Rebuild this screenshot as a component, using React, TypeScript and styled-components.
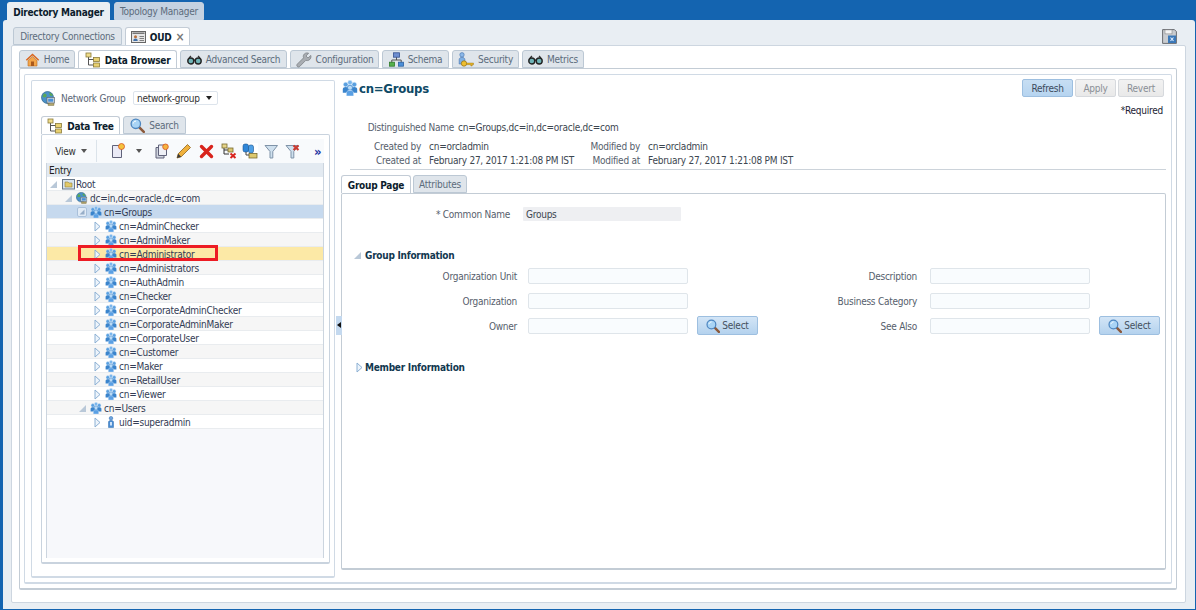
import React from 'react';
import styled, { createGlobalStyle } from 'styled-components';

const GlobalStyle = createGlobalStyle`
  html, body { margin: 0; padding: 0; }
  body {
    font-family: "DejaVu Sans Condensed", "DejaVu Sans", Tahoma, sans-serif;
    font-size: 10px;
    letter-spacing: -0.25px;
    color: #3c4650;
  }
`;

const Page = styled.div`
  width: 1196px;
  height: 610px;
  box-sizing: border-box;
  background: #1464b0;
  padding: 2px 1px 1px 3px;
  display: flex;
  flex-direction: column;
  overflow: hidden;
`;

const TabRow = styled.div<{ $pad?: number; $gap?: number }>`
  display: flex;
  align-items: flex-end;
  height: 18px;
  flex: none;
  padding-left: ${(p) => p.$pad ?? 0}px;
  gap: ${(p) => p.$gap ?? 3}px;
`;

const Tab = styled.div<{ $w: number; $active?: boolean; $tone?: string }>`
  width: ${(p) => p.$w}px;
  height: 18px;
  box-sizing: border-box;
  padding-top: 1px;
  display: flex;
  align-items: center;
  justify-content: center;
  gap: 4px;
  white-space: nowrap;
  border: 1px solid ${(p) => (p.$active ? '#c3ccd6' : '#bcc8d4')};
  border-bottom: ${(p) => (p.$active ? 'none' : '1px solid #bcc8d4')};
  border-radius: 3px 3px 0 0;
  background: ${(p) => (p.$active ? '#ffffff' : p.$tone ?? '#dfe5eb')};
  color: ${(p) => (p.$active ? '#0c1c2c' : '#5c6c7c')};
  font-weight: ${(p) => (p.$active ? 700 : 400)};
`;

const TopTab = styled(Tab)`
  border-color: ${(p) => (p.$active ? '#e9eef3' : '#c5d2e1')};
  background: ${(p) => (p.$active ? '#e9eef3' : '#c5d2e1')};
`;

const CloseMark = styled.span`
  color: #777;
  font-size: 12px;
  font-weight: 700;
`;

const Shell = styled.div`
  flex: 1;
  min-height: 0;
  background: #e9eef3;
  padding: 7px 9px 6px 8px;
  display: flex;
  flex-direction: column;
  border-radius: 3px 3px 0 0;
`;

const ConnectionTabs = styled(TabRow)`
  padding-left: 2px;
  justify-content: flex-start;
`;

const SaveButton = styled.div`
  margin-left: auto;
  margin-right: 9px;
  align-self: center;
  display: flex;
`;

const WhitePanel = styled.div`
  flex: 1;
  min-height: 0;
  background: #fff;
  border: 1px solid #cdd6e0;
  border-radius: 2px;
  padding: 4px 8px 12px 7px;
  display: flex;
  flex-direction: column;
`;

const TabBody = styled.div`
  flex: 1;
  min-height: 0;
  background: #fff;
  border: 1px solid #c3ccd5;
  border-bottom-width: 2px;
  border-radius: 2px;
  padding: 5px 4px 4px 4px;
  display: flex;
  flex-direction: column;
`;

const SplitFrame = styled.div`
  flex: 1;
  min-height: 0;
  border: 1px solid #d0dae5;
  border-bottom-width: 2px;
  border-radius: 2px;
  padding: 5px 5px 4px 6px;
  display: flex;
`;

const LeftPane = styled.div`
  width: 304px;
  flex: none;
  box-sizing: border-box;
  border: 1px solid #d0dae5;
  border-bottom-width: 2px;
  border-radius: 2px;
  padding: 9px 4px 12px 9px;
  display: flex;
  flex-direction: column;
`;

const Gutter = styled.div`
  width: 6px;
  flex: none;
  display: flex;
  align-items: center;
  justify-content: flex-end;
  padding-bottom: 8px;
`;

const CollapseHandle = styled.div`
  width: 6px;
  height: 19px;
  box-sizing: border-box;
  margin-right: -1px;
  background: #c4d9ef;
  display: flex;
  align-items: center;
  justify-content: center;
  position: relative;
  z-index: 1;
  &::before {
    content: '';
    border-style: solid;
    border-width: 3px 4px 3px 0;
    border-color: transparent #111 transparent transparent;
  }
`;

const NetworkRow = styled.div`
  display: flex;
  align-items: center;
  height: 16px;
  gap: 5px;
  flex: none;
`;

const NetworkLabel = styled.span`
  width: 67px;
  white-space: nowrap;
  color: #5c6878;
`;

const FakeSelect = styled.div`
  width: 85px;
  height: 14px;
  box-sizing: border-box;
  border: 1px solid #dde4ec;
  border-radius: 2px;
  display: flex;
  align-items: center;
  justify-content: space-between;
  padding: 0 5px 0 3px;
  white-space: nowrap;
  color: #333;
`;

const DownCaret = styled.span<{ $dark?: boolean }>`
  display: inline-block;
  border-style: solid;
  border-width: 4px 3.5px 0 3.5px;
  border-color: ${(p) => (p.$dark ? '#222' : '#555')} transparent transparent transparent;
`;

const TreeTabs = styled(TabRow)`
  margin-top: 10px;
`;

const TreePanel = styled.div`
  flex: 1;
  min-height: 0;
  border: 1px solid #c9d3de;
  border-bottom-width: 2px;
  border-radius: 2px;
  padding: 4px 5px 4px 4px;
  display: flex;
  flex-direction: column;
`;

const Toolbar = styled.div`
  height: 24px;
  flex: none;
  background: #f8fafc;
  display: flex;
  align-items: center;
`;

const ViewMenu = styled.div`
  width: 51px;
  height: 22px;
  box-sizing: border-box;
  border-right: 1px solid #dbe3ea;
  display: flex;
  align-items: center;
  justify-content: center;
  gap: 5px;
  color: #333;
`;

const ToolIcons = styled.div`
  display: flex;
  align-items: center;
  flex: 1;
  padding-left: 14px;
`;

const ToolIcon = styled.span<{ $gap?: number }>`
  display: flex;
  margin-left: ${(p) => p.$gap ?? 6}px;
  &:first-child { margin-left: 0; }
`;

const MoreChevrons = styled.span`
  margin-left: 14px;
  color: #2030a0;
  font-size: 13px;
  font-weight: 700;
  line-height: 1;
`;

const TreeTable = styled.div`
  flex: 1;
  min-height: 0;
  background: #f7f8fb;
  border-left: 1px solid #ccd5df;
  border-right: 1px solid #ccd5df;
  display: flex;
  flex-direction: column;
`;

const EntryHeader = styled.div`
  height: 14px;
  flex: none;
  box-sizing: border-box;
  background: #e3eaf1;
  color: #222;
  padding: 1px 0 0 2px;
  line-height: 13px;
`;

const rowBg = (state?: string, alt?: boolean) =>
  state === 'selected' ? '#c6d9ee' : state === 'hover' ? '#fce9a6' : alt ? '#f6f6f6' : '#ffffff';

const TreeRow = styled.div<{ $state?: string; $alt?: boolean; $indent: number }>`
  height: 14px;
  flex: none;
  box-sizing: border-box;
  position: relative;
  display: flex;
  align-items: center;
  background: ${(p) => rowBg(p.$state, p.$alt)};
  border-bottom: 1px solid #e9ecef;
  padding: 1px 0 0 ${(p) => p.$indent}px;
  color: #333c55;
  white-space: nowrap;
`;

const Twisty = styled.span<{ $w?: number }>`
  width: ${(p) => p.$w ?? 11}px;
  flex: none;
  display: flex;
`;

const NodeIcon = styled.span<{ $w?: number }>`
  width: ${(p) => p.$w ?? 14}px;
  flex: none;
  display: flex;
`;

const Callout = styled.div`
  position: absolute;
  left: 31px;
  top: -2px;
  width: 140px;
  height: 16px;
  box-sizing: border-box;
  border: 3px solid #ed1c24;
`;

const RightPane = styled.div`
  flex: 1;
  min-width: 0;
  display: flex;
  flex-direction: column;
  padding-bottom: 8px;
`;

const TitleRow = styled.div`
  height: 18px;
  margin-top: -1px;
  display: flex;
  align-items: center;
  flex: none;
  padding-left: 1px;
  gap: 1px;
`;

const Title = styled.h1`
  margin: 0;
  font-size: 13px;
  font-weight: 700;
  color: #0f4a66;
  flex: 1;
`;

const ActionButton = styled.div<{ $w: number; $primary?: boolean }>`
  width: ${(p) => p.$w}px;
  height: 18px;
  box-sizing: border-box;
  margin-left: 2px;
  display: flex;
  align-items: center;
  justify-content: center;
  border: 1px solid ${(p) => (p.$primary ? '#9dbfe0' : '#d6d9dd')};
  border-radius: 2px;
  background: ${(p) =>
    p.$primary ? 'linear-gradient(#c7def3, #b6d4f0)' : 'linear-gradient(#f2f2f2, #e9e9e9)'};
  color: ${(p) => (p.$primary ? '#3c4a5c' : '#8a8f96')};
`;

const ActionGroup = styled.div`
  display: flex;
  margin-right: 2px;
`;

const Required = styled.div`
  height: 14px;
  margin-top: 7px;
  line-height: 14px;
  text-align: right;
  padding-right: 3px;
  color: #223;
  flex: none;
`;

const MetaLine = styled.div<{ $top: number }>`
  display: flex;
  align-items: center;
  height: 14px;
  flex: none;
  margin-top: ${(p) => p.$top}px;
  white-space: nowrap;
`;

const MetaLabel = styled.span<{ $w: number }>`
  width: ${(p) => p.$w}px;
  flex: none;
  text-align: right;
  color: #56606c;
`;

const MetaValue = styled.span<{ $w?: number; $left: number }>`
  width: ${(p) => (p.$w ? `${p.$w}px` : 'auto')};
  flex: none;
  margin-left: ${(p) => p.$left}px;
  color: #3c4650;
`;

const Separator = styled.div`
  height: 1px;
  flex: none;
  background: #ccd3da;
  margin: 2px 0 5px 9px;
`;

const InnerTabBody = styled.div`
  flex: 1;
  min-height: 0;
  border: 1px solid #c3ccd5;
  border-bottom-width: 2px;
  border-radius: 2px;
  display: flex;
  flex-direction: column;
`;

const CommonNameRow = styled.div`
  display: flex;
  align-items: center;
  height: 14px;
  margin-top: 13px;
  flex: none;
`;

const CommonLabel = styled.span`
  width: 168px;
  text-align: right;
  color: #56606c;
`;

const ReadOnlyValue = styled.div`
  width: 158px;
  height: 14px;
  margin-left: 13px;
  padding: 1px 0 0 3px;
  box-sizing: border-box;
  background: #eeeff2;
  line-height: 13px;
  border-radius: 1px;
  color: #3c4650;
`;

const SectionHeader = styled.div<{ $top: number; $pad: number }>`
  display: flex;
  align-items: center;
  height: 14px;
  flex: none;
  margin-top: ${(p) => p.$top}px;
  padding-left: ${(p) => p.$pad}px;
  font-weight: 700;
  color: #12384f;
`;

const SectionTwisty = styled.span<{ $w: number }>`
  width: ${(p) => p.$w}px;
  flex: none;
  display: flex;
`;

const FormGrid = styled.div`
  display: grid;
  grid-template-columns: 175px 160px 70px 172px 160px 70px;
  grid-auto-rows: 25px;
  align-items: center;
  margin-left: 11px;
  margin-top: 1px;
  flex: none;
`;

const FieldLabel = styled.div<{ $pad: number }>`
  text-align: right;
  padding: 2px ${(p) => p.$pad}px 0 0;
  color: #56606c;
`;

const FieldInput = styled.div`
  height: 16px;
  box-sizing: border-box;
  border: 1px solid #dfe5ea;
  border-radius: 2px;
  background: #f9fcfe;
`;

const SelectButton = styled.div`
  width: 61px;
  height: 19px;
  margin-left: 9px;
  box-sizing: border-box;
  border: 1px solid #9dbfe0;
  border-radius: 2px;
  background: linear-gradient(#d3e5f6, #b4d2ee);
  display: flex;
  align-items: center;
  justify-content: center;
  gap: 2px;
  color: #44505e;
`;

const GroupIcon = ({ size = 12 }: { size?: number }) => (
  <svg width={size} height={size} viewBox="0 0 12 12">
    <circle cx="2.800" cy="3.400" r="1.800" fill="#5aa0e0" stroke="#dcecfb" strokeWidth=".4" />
    <circle cx="9.200" cy="3.400" r="1.800" fill="#5aa0e0" stroke="#dcecfb" strokeWidth=".4" />
    <circle cx="6" cy="1.900" r="1.700" fill="#7ab6ec" stroke="#dcecfb" strokeWidth=".4" />
    <path d="M.6 9.500V6.800C.6 5.700 1.600 5.200 2.800 5.200S5 5.700 5 6.800v2.700z" fill="#3a84cc" />
    <path d="M7 9.500V6.800c0-1.100 1-1.600 2.200-1.600s2.200.5 2.200 1.600v2.700z" fill="#3a84cc" />
    <circle cx="6" cy="5.800" r="1.900" fill="#b9daf6" stroke="#3a84cc" strokeWidth=".6" />
    <path d="M3.300 12V9.600c0-1.100 1.200-1.800 2.700-1.800s2.700.7 2.700 1.800V12z" fill="#5aa0e4" stroke="#dcecfb" strokeWidth=".4" />
  </svg>
);

const TreeBoxesIcon = () => (
  <svg width="16" height="16" viewBox="0 0 16 16">
    <path d="M3.500 4v9H9M3.500 7.500H9" fill="none" stroke="#555" strokeWidth="1" />
    <rect x="1" y="1" width="5" height="4" fill="#efdc8a" stroke="#8a7a3a" strokeWidth=".8" />
    <rect x="8.500" y="5.500" width="6" height="4" fill="#e8d070" stroke="#8a7a3a" strokeWidth=".8" />
    <rect x="8.500" y="11" width="6" height="4" fill="#e8d070" stroke="#8a7a3a" strokeWidth=".8" />
  </svg>
);

const HomeIcon = () => (
  <svg width="15" height="15" viewBox="0 0 15 15">
    <path d="M.8 7.800 7.500 1.500l6.700 6.300-1 1L7.500 3.600 1.800 8.800z" fill="#d9651e" />
    <path d="M3 8.500 7.500 4.500 12 8.500V14H3z" fill="#f3a64a" stroke="#b9691f" strokeWidth=".6" />
    <rect x="6" y="9.500" width="3" height="4.500" fill="#a9591c" />
  </svg>
);

const GlassesIcon = () => (
  <svg width="15" height="12" viewBox="0 0 15 12">
    <path d="M2 4 4 2M13 4l-2-2" stroke="#333" strokeWidth="1.200" fill="none" />
    <circle cx="3.800" cy="7" r="3" fill="#6fb4b8" stroke="#222" strokeWidth="1.400" />
    <circle cx="11.200" cy="7" r="3" fill="#6fb4b8" stroke="#222" strokeWidth="1.400" />
    <path d="M6.500 6.200h2" stroke="#222" strokeWidth="1.200" />
  </svg>
);

const WrenchIcon = () => (
  <svg width="16" height="16" viewBox="0 0 16 16">
    <path
      d="M14.800 3.400 12 6 10 4l2.600-2.800c-2-.8-4.200 0-5 1.800-.5 1-.4 2 0 2.800L1.400 12c-.8.800-.8 1.800-.1 2.500s1.700.7 2.500-.1l6-6.100c1 .4 2.100.4 3-.1 1.800-.9 2.600-3 2-4.800z"
      fill="#a9adb2"
      stroke="#74787d"
      strokeWidth=".7"
    />
  </svg>
);

const SchemaIcon = () => (
  <svg width="15" height="15" viewBox="0 0 15 15">
    <path d="M7.500 5v3M2.800 11V8h9.400v3" fill="none" stroke="#555" strokeWidth="1" />
    <rect x="4.500" y=".8" width="6" height="4.400" fill="#6f8fd0" stroke="#34508f" strokeWidth=".8" />
    <rect x=".5" y="10.200" width="5" height="4" fill="#55b04c" stroke="#2e7a2a" strokeWidth=".8" />
    <rect x="9.500" y="10.200" width="5" height="4" fill="#4c8fd8" stroke="#2b5f9f" strokeWidth=".8" />
  </svg>
);

const SecurityIcon = () => (
  <svg width="16" height="16" viewBox="0 0 16 16">
    <circle cx="4" cy="2.800" r="2.200" fill="#8cb8e8" stroke="#3f70ad" strokeWidth=".6" />
    <path d="M1.200 12V7.500C1.200 6 2.400 5.400 4 5.400S6.800 6 6.800 7.500V12z" fill="#7fb0e4" stroke="#3f70ad" strokeWidth=".6" />
    <circle cx="6" cy="11.500" r="2.700" fill="#eebe2f" stroke="#8f6d12" strokeWidth=".7" />
    <path d="M8.500 11h7v1.700h-1.300v1.300h-1.400v-1.300H8.500z" fill="#e6b326" stroke="#8f6d12" strokeWidth=".4" />
  </svg>
);

const SearchIcon = ({ size = 15 }: { size?: number }) => (
  <svg width={size} height={size} viewBox="0 0 15 15">
    <path d="m8.800 8.800 5 5" stroke="#8c5a3c" strokeWidth="2.600" strokeLinecap="round" />
    <circle cx="5.800" cy="5.800" r="4.700" fill="#a9d4f5" stroke="#4d86c0" strokeWidth="1.300" />
    <path d="M3.200 5.500c.3-1.500 1.300-2.300 2.800-2.400" fill="none" stroke="#fff" strokeWidth="1" />
  </svg>
);

const GlobeIcon = ({ size = 15 }: { size?: number }) => (
  <svg width={size} height={size} viewBox="0 0 15 15">
    <circle cx="6.500" cy="6.500" r="6" fill="#4a90c8" stroke="#2d6488" strokeWidth=".7" />
    <path d="M3 2.500c2 .2 3 1.200 2.500 2.800S2.500 6.500 1.500 5.500M9 1.500c1 1.300 2.500 1.500 3 3L9.500 5 8 3z" fill="#5aa856" />
    <rect x="6" y="6.500" width="7.500" height="5.500" fill="#cfd8de" stroke="#5c6a74" strokeWidth=".7" />
    <rect x="7.200" y="7.700" width="5" height="3" fill="#4a90d8" />
    <rect x="7" y="12.500" width="6" height="2" fill="#b3a66c" stroke="#6e6538" strokeWidth=".4" />
  </svg>
);

const CardIcon = () => (
  <svg width="15" height="12" viewBox="0 0 15 12">
    <rect x=".5" y=".5" width="14" height="11" fill="#e6e6e6" stroke="#666" />
    <rect x="1.500" y="1.500" width="12" height="1.500" fill="#777" />
    <circle cx="4.500" cy="5.800" r="1.500" fill="#b5703c" />
    <path d="M2.300 10c0-1.600 1-2.400 2.200-2.400S6.700 8.400 6.700 10z" fill="#3f6fa8" />
    <path d="M8.500 5.500h4.500M8.500 7.500h4.500M8.500 9.500h4.500" stroke="#666" strokeWidth=".8" />
  </svg>
);

const SaveIcon = () => (
  <svg width="15" height="15" viewBox="0 0 15 15">
    <path d="M.6.600h11.800l2 2v11.800H.6z" fill="#c9ccd0" stroke="#5c6064" strokeWidth=".9" />
    <rect x="3" y=".9" width="7" height="4" fill="#f4f4f4" stroke="#777" strokeWidth=".5" />
    <rect x="6" y="6.500" width="8" height="7.500" fill="#3b78b8" />
    <path d="m8.500 8.500 3 3.300m0-3.300-3 3.300" stroke="#dcecff" strokeWidth="1.100" />
  </svg>
);

const FolderNodeIcon = () => (
  <svg width="13" height="12" viewBox="0 0 13 12">
    <rect x=".5" y="1.500" width="12" height="9.500" fill="#d7e3ef" stroke="#69788a" />
    <path d="M3 4h3l1 1h3v4H3z" fill="#e2c968" stroke="#93803a" strokeWidth=".6" />
  </svg>
);

const UserIcon = () => (
  <svg width="8" height="12" viewBox="0 0 8 12">
    <circle cx="4" cy="2.200" r="1.800" fill="#6ea4de" stroke="#2f6cae" strokeWidth=".5" />
    <path d="M1.500 11.500V6c0-1 1-1.500 2.500-1.500S6.500 5 6.500 6v5.500z" fill="#4a8cd2" stroke="#2f6cae" strokeWidth=".5" />
    <rect x="3" y="6" width="2" height="3.500" fill="#cfe3f8" />
  </svg>
);

const TwistyOpen = () => (
  <svg width="7" height="7" viewBox="0 0 7 7">
    <path d="M7 0v7H0z" fill="#b9c8d8" />
  </svg>
);

const TwistyClosed = () => (
  <svg width="7" height="11" viewBox="0 0 7 11">
    <path d="M1 1v9l5-4.500z" fill="#edf4fb" stroke="#8cb0d4" strokeWidth="1" />
  </svg>
);

const SelectedTwisty = () => (
  <svg width="10" height="10" viewBox="0 0 10 10">
    <rect x=".5" y=".5" width="9" height="9" rx="1.500" fill="#e1ebf6" stroke="#a9c0da" />
    <path d="M7.500 2.500v5h-5z" fill="#97aec8" />
  </svg>
);

const NewPageIcon = () => (
  <svg width="15" height="16" viewBox="0 0 15 16">
    <path d="M1.500 2.500h9v12h-9z" fill="#eaeaf6" stroke="#60627a" />
    <circle cx="10.500" cy="3.500" r="3" fill="#f4c23e" stroke="#d9501e" strokeWidth=".8" />
  </svg>
);

const CopyPageIcon = () => (
  <svg width="15" height="16" viewBox="0 0 15 16">
    <path d="M1 4.500h8v10.500H1z" fill="#cfd4de" stroke="#60627a" />
    <path d="M3.500 2h8v10.500h-8z" fill="#eef0f6" stroke="#60627a" />
    <circle cx="10.500" cy="3.800" r="2.800" fill="#f4b43e" stroke="#d9501e" strokeWidth=".8" />
  </svg>
);

const PencilIcon = () => (
  <svg width="16" height="16" viewBox="0 0 16 16">
    <path d="M1 15l1.200-4.200L11.500 1.500l3 3L5.200 13.800z" fill="#f0b13c" stroke="#8e6420" strokeWidth=".8" />
    <path d="M1 15l1.200-4.200 3 3z" fill="#3a3a3a" />
  </svg>
);

const RedXIcon = () => (
  <svg width="15" height="15" viewBox="0 0 15 15">
    <path d="M2.500 2.500l10 10m0-10-10 10" stroke="#d8231c" strokeWidth="3.400" strokeLinecap="round" />
  </svg>
);

const TreeDeleteIcon = () => (
  <svg width="16" height="16" viewBox="0 0 16 16">
    <path d="M3 4v7h5M3 7h5" fill="none" stroke="#333" />
    <rect x="1" y="1" width="5" height="4" fill="#e5d489" stroke="#776a30" strokeWidth=".8" />
    <rect x="7" y="5" width="5" height="4" fill="#d9c56e" stroke="#776a30" strokeWidth=".8" />
    <path d="m9.500 10.500 5 4.500m0-4.500-5 4.500" stroke="#d8231c" strokeWidth="1.900" />
  </svg>
);

const TreeLinkIcon = () => (
  <svg width="16" height="16" viewBox="0 0 16 16">
    <rect width="16" height="16" fill="#fff" />
    <rect x="1" y="1" width="5.500" height="8" rx="2" fill="#2f86d8" stroke="#17528f" strokeWidth=".6" />
    <rect x="6.500" y="2" width="5" height="8" rx="2" fill="#4fa0e6" stroke="#17528f" strokeWidth=".6" />
    <rect x="7" y="10.500" width="8" height="4.500" fill="#dcc86e" stroke="#776a30" strokeWidth=".8" />
    <path d="M4 9v3h3" fill="none" stroke="#444" />
  </svg>
);

const FunnelIcon = ({ cross }: { cross?: boolean }) => (
  <svg width="15" height="15" viewBox="0 0 15 15">
    <path d="M1 1.500h12.500L8.800 7.500V14H6V7.500z" fill="#cfe0ee" stroke="#7f93a8" />
    {cross && <path d="m8.500 1.500 5 4.500m0-4.500-5 4.500" stroke="#cc3a30" strokeWidth="2.200" />}
  </svg>
);

const children = [
  'cn=AdminChecker',
  'cn=AdminMaker',
  'cn=Administrator',
  'cn=Administrators',
  'cn=AuthAdmin',
  'cn=Checker',
  'cn=CorporateAdminChecker',
  'cn=CorporateAdminMaker',
  'cn=CorporateUser',
  'cn=Customer',
  'cn=Maker',
  'cn=RetailUser',
  'cn=Viewer',
];

export default function App() {
  return (
    <Page>
      <GlobalStyle />
      <TabRow $pad={4} $gap={4}>
        <TopTab $w={103} $active>Directory Manager</TopTab>
        <TopTab $w={90}>Topology Manager</TopTab>
      </TabRow>
      <Shell>
        <ConnectionTabs>
          <Tab $w={109}>Directory Connections</Tab>
          <Tab $w={65} $active>
            <CardIcon />
            OUD
            <CloseMark>×</CloseMark>
          </Tab>
          <SaveButton><SaveIcon /></SaveButton>
        </ConnectionTabs>
        <WhitePanel>
          <TabRow $gap={3}>
            <Tab $w={56}><HomeIcon />Home</Tab>
            <Tab $w={99} $active><TreeBoxesIcon />Data Browser</Tab>
            <Tab $w={107}><GlassesIcon />Advanced Search</Tab>
            <Tab $w={89}><WrenchIcon />Configuration</Tab>
            <Tab $w={67}><SchemaIcon />Schema</Tab>
            <Tab $w={67}><SecurityIcon />Security</Tab>
            <Tab $w={62}><GlassesIcon />Metrics</Tab>
          </TabRow>
          <TabBody>
            <SplitFrame>
              <LeftPane>
                <NetworkRow>
                  <GlobeIcon />
                  <NetworkLabel>Network Group</NetworkLabel>
                  <FakeSelect>network-group <DownCaret $dark /></FakeSelect>
                </NetworkRow>
                <TreeTabs>
                  <Tab $w={79} $active><TreeBoxesIcon />Data Tree</Tab>
                  <Tab $w={63}><SearchIcon />Search</Tab>
                </TreeTabs>
                <TreePanel>
                  <Toolbar>
                    <ViewMenu>View <DownCaret /></ViewMenu>
                    <ToolIcons>
                      <ToolIcon><NewPageIcon /></ToolIcon>
                      <ToolIcon $gap={10}><DownCaret /></ToolIcon>
                      <ToolIcon $gap={13}><CopyPageIcon /></ToolIcon>
                      <ToolIcon $gap={6}><PencilIcon /></ToolIcon>
                      <ToolIcon $gap={7}><RedXIcon /></ToolIcon>
                      <ToolIcon $gap={7}><TreeDeleteIcon /></ToolIcon>
                      <ToolIcon $gap={5}><TreeLinkIcon /></ToolIcon>
                      <ToolIcon $gap={6}><FunnelIcon /></ToolIcon>
                      <ToolIcon $gap={6}><FunnelIcon cross /></ToolIcon>
                      <MoreChevrons>»</MoreChevrons>
                    </ToolIcons>
                  </Toolbar>
                  <TreeTable>
                    <EntryHeader>Entry</EntryHeader>
                    <TreeRow $indent={3}>
                      <Twisty $w={12}><TwistyOpen /></Twisty>
                      <NodeIcon><FolderNodeIcon /></NodeIcon>Root
                    </TreeRow>
                    <TreeRow $indent={18} $alt>
                      <Twisty><TwistyOpen /></Twisty>
                      <NodeIcon><GlobeIcon size={12} /></NodeIcon>dc=in,dc=oracle,dc=com
                    </TreeRow>
                    <TreeRow $indent={30} $state="selected">
                      <Twisty $w={13}><SelectedTwisty /></Twisty>
                      <NodeIcon><GroupIcon /></NodeIcon>cn=Groups
                    </TreeRow>
                    {children.map((name, i) => (
                      <TreeRow
                        key={name}
                        $indent={47}
                        $alt={i % 2 === 1}
                        $state={name === 'cn=Administrator' ? 'hover' : undefined}
                      >
                        <Twisty><TwistyClosed /></Twisty>
                        <NodeIcon><GroupIcon /></NodeIcon>
                        {name}
                        {name === 'cn=Administrator' && <Callout />}
                      </TreeRow>
                    ))}
                    <TreeRow $indent={32} $alt>
                      <Twisty><TwistyOpen /></Twisty>
                      <NodeIcon><GroupIcon /></NodeIcon>cn=Users
                    </TreeRow>
                    <TreeRow $indent={47}>
                      <Twisty $w={13}><TwistyClosed /></Twisty>
                      <NodeIcon $w={12}><UserIcon /></NodeIcon>uid=superadmin
                    </TreeRow>
                  </TreeTable>
                </TreePanel>
              </LeftPane>
              <Gutter><CollapseHandle /></Gutter>
              <RightPane>
                <TitleRow>
                  <GroupIcon size={16} />
                  <Title>cn=Groups</Title>
                  <ActionGroup>
                    <ActionButton $w={51} $primary>Refresh</ActionButton>
                    <ActionButton $w={41}>Apply</ActionButton>
                    <ActionButton $w={46}>Revert</ActionButton>
                  </ActionGroup>
                </TitleRow>
                <Required>*Required</Required>
                <MetaLine $top={2}>
                  <MetaLabel $w={113}>Distinguished Name</MetaLabel>
                  <MetaValue $left={4}>cn=Groups,dc=in,dc=oracle,dc=com</MetaValue>
                </MetaLine>
                <MetaLine $top={5}>
                  <MetaLabel $w={80}>Created by</MetaLabel>
                  <MetaValue $left={8} $w={151}>cn=orcladmin</MetaValue>
                  <MetaLabel $w={60}>Modified by</MetaLabel>
                  <MetaValue $left={8}>cn=orcladmin</MetaValue>
                </MetaLine>
                <MetaLine $top={0}>
                  <MetaLabel $w={80}>Created at</MetaLabel>
                  <MetaValue $left={8} $w={151}>February 27, 2017 1:21:08 PM IST</MetaValue>
                  <MetaLabel $w={60}>Modified at</MetaLabel>
                  <MetaValue $left={8}>February 27, 2017 1:21:08 PM IST</MetaValue>
                </MetaLine>
                <Separator />
                <TabRow $gap={2}>
                  <Tab $w={70} $active>Group Page</Tab>
                  <Tab $w={54}>Attributes</Tab>
                </TabRow>
                <InnerTabBody>
                  <CommonNameRow>
                    <CommonLabel>* Common Name</CommonLabel>
                    <ReadOnlyValue>Groups</ReadOnlyValue>
                  </CommonNameRow>
                  <SectionHeader $top={27} $pad={12}>
                    <SectionTwisty $w={11}><TwistyOpen /></SectionTwisty>
                    Group Information
                  </SectionHeader>
                  <FormGrid>
                    <FieldLabel $pad={11}>Organization Unit</FieldLabel>
                    <FieldInput />
                    <span />
                    <FieldLabel $pad={13}>Description</FieldLabel>
                    <FieldInput />
                    <span />
                    <FieldLabel $pad={11}>Organization</FieldLabel>
                    <FieldInput />
                    <span />
                    <FieldLabel $pad={13}>Business Category</FieldLabel>
                    <FieldInput />
                    <span />
                    <FieldLabel $pad={11}>Owner</FieldLabel>
                    <FieldInput />
                    <SelectButton><SearchIcon size={14} />Select</SelectButton>
                    <FieldLabel $pad={13}>See Also</FieldLabel>
                    <FieldInput />
                    <SelectButton><SearchIcon size={14} />Select</SelectButton>
                  </FormGrid>
                  <SectionHeader $top={22} $pad={14}>
                    <SectionTwisty $w={9}><TwistyClosed /></SectionTwisty>
                    Member Information
                  </SectionHeader>
                </InnerTabBody>
              </RightPane>
            </SplitFrame>
          </TabBody>
        </WhitePanel>
      </Shell>
    </Page>
  );
}
